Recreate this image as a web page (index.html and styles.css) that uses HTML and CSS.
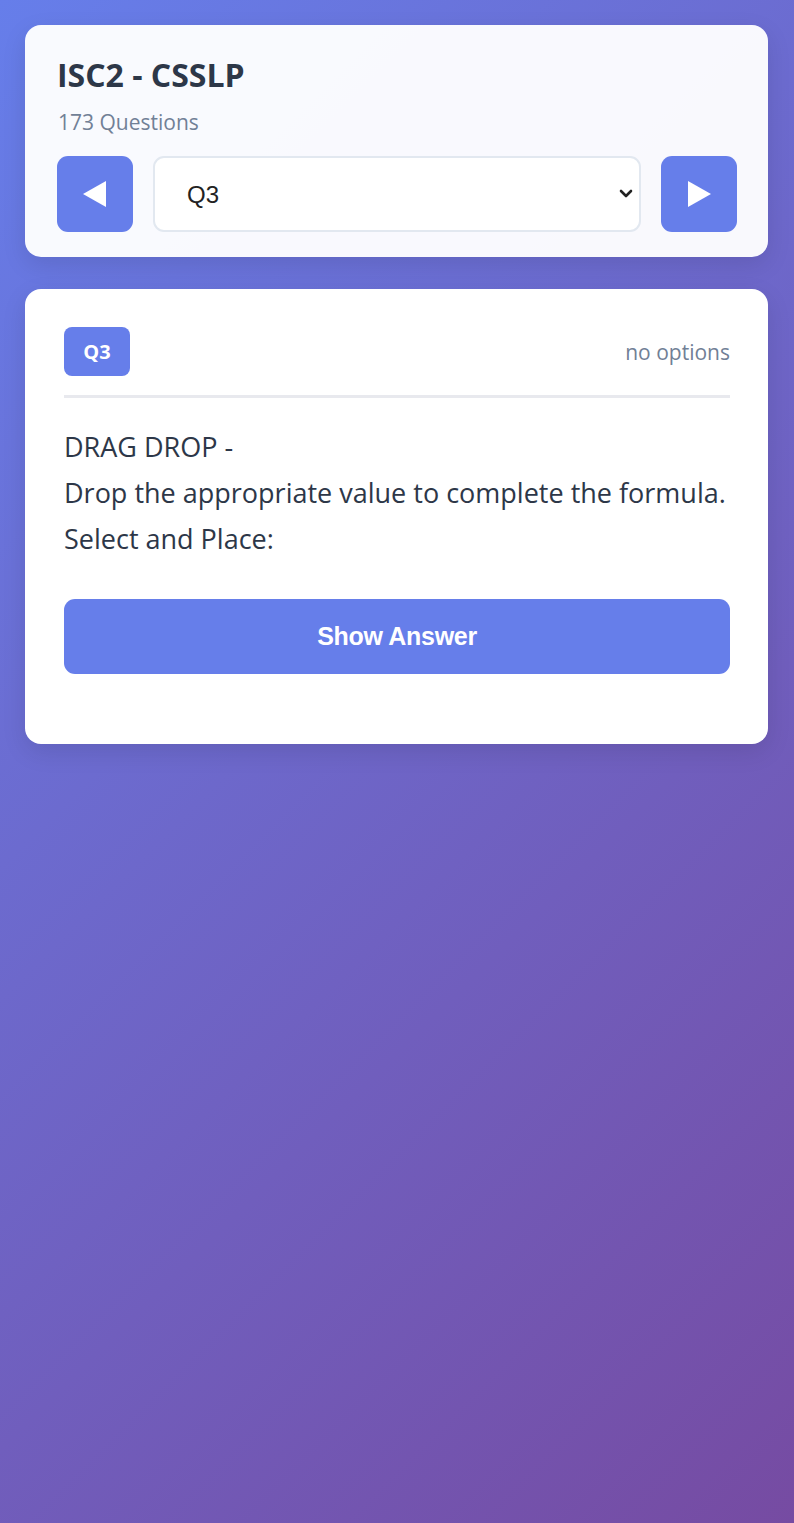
FILE: index.html
```html
<!DOCTYPE html>
<html lang="en">
<head>
<meta charset="utf-8">
<title>ISC2 - CSSLP</title>
<link rel="stylesheet" href="styles.css">
</head>
<body>
<div class="page">
  <section class="card header-card">
    <h1 class="title">ISC2 - CSSLP</h1>
    <p class="count">173 Questions</p>
    <div class="nav">
      <button class="nav-btn" aria-label="Previous">
        <svg width="26" height="28" viewBox="0 0 26 28"><polygon points="24,1 24,27 1,14" fill="#fff"/></svg>
      </button>
      <div class="select-wrap">
        <select class="q-select">
          <option>Q3</option>
        </select>
        <svg class="chev" width="14" height="10" viewBox="0 0 14 10"><polyline points="2,2 7,7 12,2" fill="none" stroke="#222" stroke-width="2.6" stroke-linecap="round" stroke-linejoin="round"/></svg>
      </div>
      <button class="nav-btn" aria-label="Next">
        <svg width="26" height="28" viewBox="0 0 26 28"><polygon points="2,1 2,27 25,14" fill="#fff"/></svg>
      </button>
    </div>
  </section>

  <section class="card question-card">
    <div class="q-head">
      <span class="badge">Q3</span>
      <span class="meta">no options</span>
    </div>
    <div class="q-text">
      <p>DRAG DROP -</p>
      <p>Drop the appropriate value to complete the formula.</p>
      <p>Select and Place:</p>
    </div>
    <button class="show-btn">Show Answer</button>
  </section>
</div>
</body>
</html>
```

FILE: styles.css
```css
html, body {
  margin: 0;
  padding: 0;
}
body {
  min-height: 1523px;
  background: linear-gradient(135deg, #667eea 0%, #764ba2 100%);
  font-family: "Open Sans", "Noto Sans", sans-serif;
  color: #2d3748;
}
.page {
  padding: 25px 26px 25px 25px;
  display: flex;
  flex-direction: column;
  gap: 32px;
}
.card {
  border-radius: 16px;
  box-shadow: 0 8px 24px rgba(0, 0, 0, 0.10);
}
.header-card {
  background: rgba(255, 255, 255, 0.96);
  padding: 32px 31px 25px 32px;
}
.title {
  margin: 0;
  font-size: 32px;
  line-height: 36px;
  font-weight: 700;
  color: #2d3748;
  letter-spacing: 0;
}
.count {
  margin: 16px 0 0 1px;
  font-size: 21px;
  line-height: 26px;
  color: #718096;
}
.nav {
  margin-top: 21px;
  display: flex;
  gap: 20px;
  align-items: stretch;
  height: 76px;
}
.nav-btn {
  width: 76px;
  flex: 0 0 76px;
  border: none;
  border-radius: 11px;
  background: #667eea;
  display: flex;
  align-items: center;
  justify-content: center;
  padding: 0;
}
.select-wrap {
  position: relative;
  flex: 1;
  display: flex;
}
.q-select {
  flex: 1;
  appearance: none;
  -webkit-appearance: none;
  border: 2px solid #e2e8f0;
  border-radius: 11px;
  background: #fff;
  font-family: "Liberation Sans", Arial, sans-serif;
  font-size: 24px;
  color: #222;
  padding: 0 32px;
}
.chev {
  position: absolute;
  right: 8px;
  top: 33px;
  pointer-events: none;
}
.question-card {
  background: #fff;
  padding: 38px 38px 70px 39px;
}
.q-head {
  display: flex;
  justify-content: space-between;
  align-items: center;
  padding-bottom: 19px;
  border-bottom: 3px solid #e8e9ee;
}
.badge {
  display: inline-flex;
  align-items: center;
  justify-content: center;
  width: 66px;
  height: 49px;
  border-radius: 8px;
  background: #667eea;
  color: #fff;
  font-weight: 700;
  font-size: 20px;
}
.meta {
  font-size: 21px;
  color: #718096;
}
.q-text {
  margin-top: 26px;
  font-size: 27px;
  line-height: 46px;
  color: #2d3748;
  letter-spacing: 0;
}
.q-text p {
  margin: 0;
}
.show-btn {
  margin-top: 37px;
  width: 100%;
  height: 75px;
  border: none;
  border-radius: 11px;
  background: #667eea;
  color: #fff;
  font-family: "Liberation Sans", Arial, sans-serif;
  font-weight: 700;
  font-size: 25px;
  letter-spacing: -0.3px;
}
```
